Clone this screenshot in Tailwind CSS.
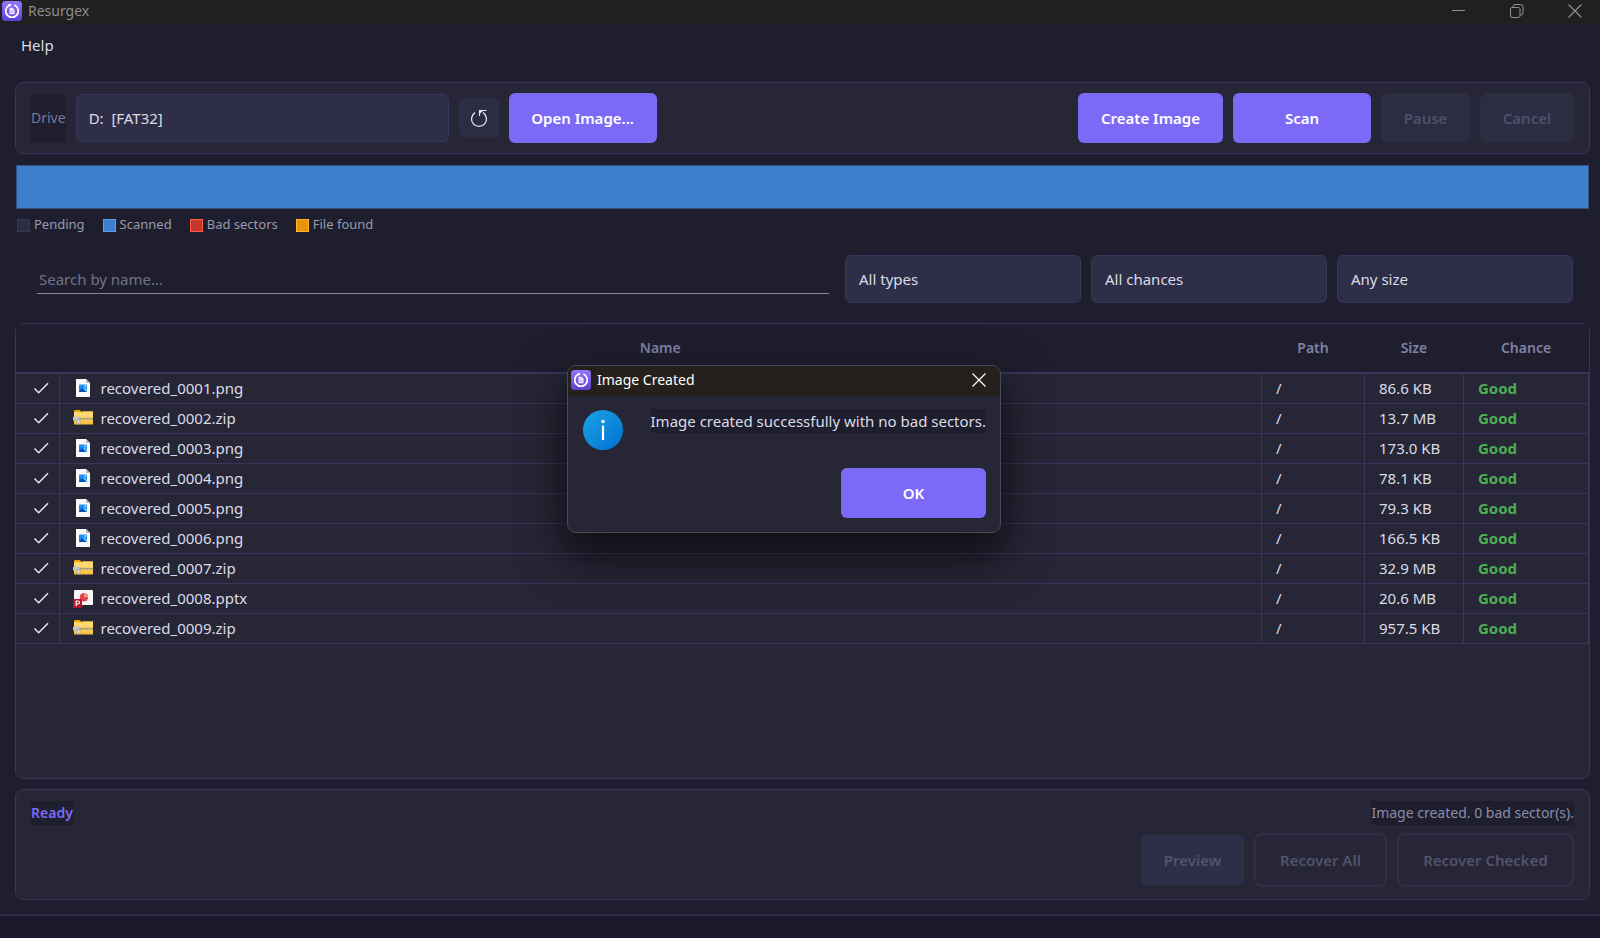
<!DOCTYPE html>
<html lang="en">
<head>
    <meta charset="UTF-8">
    <meta name="viewport" content="width=device-width, initial-scale=1.0">
    <title>Resurgex</title>
    <script src="https://cdn.jsdelivr.net/npm/@tailwindcss/browser@4"></script>
</head>
<body class="relative flex min-h-screen flex-col bg-[#1e1e2e] font-['Noto_Sans','Open_Sans',sans-serif] text-[15px] text-[#dcdce6]">

    <!-- Shared icons -->
    <svg class="absolute size-0" aria-hidden="true">
        <defs>
            <linearGradient id="logo-bg" x1="0" y1="0" x2="0" y2="1">
                <stop offset="0" stop-color="#9478fb"/>
                <stop offset="1" stop-color="#5c3fd0"/>
            </linearGradient>
            <linearGradient id="info-bg" x1="0" y1="0" x2="1" y2="1">
                <stop offset="0" stop-color="#1ba4e8"/>
                <stop offset="1" stop-color="#0270cf"/>
            </linearGradient>
            <linearGradient id="folder-bg" x1="0" y1="0" x2="0" y2="1">
                <stop offset="0" stop-color="#ffe082"/>
                <stop offset="1" stop-color="#f7bf3a"/>
            </linearGradient>
        </defs>
        <symbol id="logo" viewBox="0 0 20 20">
            <rect width="20" height="20" rx="3.500" fill="url(#logo-bg)"/>
            <path d="M7.200 4.300a6.300 6.300 0 1 0 5.600 0" fill="none" stroke="#fff" stroke-width="1.700" stroke-linecap="round"/>
            <path d="M6.300 3 9.600 3.200 8 6z" fill="#fff"/>
            <path d="M7.500 6.800h3.200l1.900 1.900v4.500H7.500z" fill="#eee8ff"/>
            <path d="M8.700 9.800h2.700M8.700 11.500h2.700" stroke="#a08af2" stroke-width=".6"/>
        </symbol>
        <symbol id="png" viewBox="0 0 20 20">
            <path d="M3 1h10l4 4v14H3z" fill="#fafafa"/>
            <path d="M13 1v4h4z" fill="#b9bcc4"/>
            <rect x="6" y="6.500" width="8" height="7.500" rx=".8" fill="#1f8cf0"/>
            <path d="M6 13.200 9.200 9.800 13.400 14H6.800a.8.800 0 0 1-.8-.8z" fill="#0b4fb3"/>
            <path d="M9.800 10.400 11.600 9 14 11.400V14h-.7z" fill="#44c1fb"/>
            <circle cx="12.300" cy="8.100" r=".8" fill="#fff"/>
        </symbol>
        <symbol id="zip" viewBox="0 0 20 20">
            <path d="M1 3a1 1 0 0 1 1-1h5l2 2.500H1z" fill="#f0a30a"/>
            <path d="M1 4h19v12.500H1z" fill="url(#folder-bg)"/>
            <path d="M1 4.200h7.500l1-1H20v2H1z" fill="#ffd35c"/>
            <path d="M5 9.500h15v2.500H5z" fill="#d9c48a"/>
            <path d="M5 10.800h15" stroke="#77694a" stroke-width="1" stroke-dasharray="1 .8"/>
            <path d="M0 8.800h6.500v3.700H0z" fill="#c3c5c9"/>
            <path d="M4 11.500h3v4.500H4z" fill="#dfe0e2" stroke="#8b8d91" stroke-width=".6"/>
        </symbol>
        <symbol id="pptx" viewBox="0 0 20 20">
            <rect x="1" y="2" width="19" height="15" rx="1" fill="#f7f7f7"/>
            <circle cx="11" cy="9.300" r="4.200" fill="#e8404a"/>
            <path d="M11 9.300V5.100a4.200 4.200 0 0 1 4.200 4.200z" fill="#ff8f7e"/>
            <rect x="0" y="11" width="9" height="9" rx="1.200" fill="#b5152f"/>
            <path d="M3.200 18v-5h1.800a1.500 1.500 0 0 1 0 3H3.200" fill="none" stroke="#fff" stroke-width="1.200"/>
        </symbol>
    </svg>

    <!-- Title bar -->
    <header class="flex h-6 items-center bg-[#202020] pr-[17px] pb-[2px] pl-0.5">
        <svg class="size-5"><use href="#logo"/></svg>
        <span class="ml-1.5 text-sm text-[#8d8d8d]">Resurgex</span>
        <div class="ml-auto flex items-center gap-[42px] text-[#8f8f8f]">
            <button type="button" aria-label="Minimize" class="size-4">
                <svg class="size-4" viewBox="0 0 16 16" fill="none" stroke="currentColor"><path d="M1 7.500h13"/></svg>
            </button>
            <button type="button" aria-label="Restore" class="size-4">
                <svg class="size-4" viewBox="0 0 16 16" fill="none" stroke="currentColor"><rect x="1.500" y="4.500" width="9.500" height="10" rx="1.500"/><path d="M4 4.300V3.500a2 2 0 0 1 2-2h5.500a2.500 2.500 0 0 1 2.500 2.500V10a2 2 0 0 1-2 2h-.8"/></svg>
            </button>
            <button type="button" aria-label="Close" class="size-4">
                <svg class="size-4" viewBox="0 0 16 16" fill="none" stroke="currentColor" stroke-width="1.200"><path d="m1.500 1.500 13 13M14.500 1.500l-13 13"/></svg>
            </button>
        </div>
    </header>

    <!-- Menu -->
    <nav class="flex h-[58px] items-start px-[21px] pt-[9px]">
        <a href="#" class="text-[15px] leading-6">Help</a>
    </nav>

    <main class="flex flex-1 flex-col pr-[10px] pl-[15px]">
        <!-- Drive toolbar -->
        <section class="flex h-[72px] items-center gap-[10px] rounded-lg border border-[#37365a] bg-[#262637] px-[15px]">
            <label for="drive" class="flex h-12 items-center bg-[#1e1e2e] text-sm text-[#7a799c]">Drive</label>
            <select id="drive" class="h-12 w-[373px] appearance-none rounded-md border border-[#37365a] bg-[#2f2e48] px-3 text-[15px]">
                <option>D:&nbsp; [FAT32]</option>
            </select>
            <button type="button" aria-label="Refresh" class="grid size-10 place-items-center rounded-md bg-[#2c2c42]">
                <svg class="size-5" viewBox="0 0 20 20" fill="none" stroke="#e4e4ea" stroke-width="1.300"><path d="M6 4.600a7.500 7.500 0 1 0 8 0"/><path d="M10.500 8V2.500H17.500" stroke-width="1.200"/><path d="M10.500 2.500h4l-4 3.500z" fill="#e4e4ea" stroke="none"/></svg>
            </button>
            <button type="button" class="h-[50px] w-[148px] rounded-md bg-[#7c6af7] text-[15px] font-semibold text-white">Open Image...</button>
            <button type="button" class="ml-auto h-[50px] w-[145px] rounded-md bg-[#7c6af7] text-[15px] font-semibold text-white">Create Image</button>
            <button type="button" class="h-[50px] w-[138px] rounded-md bg-[#7c6af7] text-[15px] font-semibold text-white">Scan</button>
            <button type="button" disabled class="h-[50px] w-[89px] rounded-md bg-[#2c2c42] text-[15px] font-semibold text-[#504f6b]">Pause</button>
            <button type="button" disabled class="h-[50px] w-[94px] rounded-md bg-[#2c2c42] text-[15px] font-semibold text-[#504f6b]">Cancel</button>
        </section>

        <!-- Sector map -->
        <div class="mx-px mt-[11px] h-11 border border-[#35507c] bg-[#3d7fce]"></div>
        <ul class="mt-1 flex h-6 items-center gap-[18px] pl-0.5 text-[13px] text-[#9a99ad]">
            <li class="flex items-center gap-1"><span class="size-[13px] border border-[#37365a] bg-[#2d2d42]"></span>Pending</li>
            <li class="flex items-center gap-1"><span class="size-[13px] border border-[#5aa0ee] bg-[#3d7fce]"></span>Scanned</li>
            <li class="flex items-center gap-1"><span class="size-[13px] border border-[#ff5a45] bg-[#c0392b]"></span>Bad sectors</li>
            <li class="flex items-center gap-1"><span class="size-[13px] border border-[#ffb62e] bg-[#e8940a]"></span>File found</li>
        </ul>

        <!-- Filters -->
        <div class="mt-[18px] flex items-center gap-[10px] pr-[17px] pl-[22px]">
            <input type="text" aria-label="Search by name" placeholder="Search by name..." class="mr-[6px] h-[30px] min-w-0 flex-1 border-b border-[#8a8a94] px-0.5 text-[15px] placeholder:text-[#73728a]">
            <select aria-label="Type" class="h-12 w-[236px] appearance-none rounded-md border border-[#37365a] bg-[#2f2e48] px-[13px] text-[15px]">
                <option>All types</option>
            </select>
            <select aria-label="Chance" class="h-12 w-[236px] appearance-none rounded-md border border-[#37365a] bg-[#2f2e48] px-[13px] text-[15px]">
                <option>All chances</option>
            </select>
            <select aria-label="Size" class="h-12 w-[236px] appearance-none rounded-md border border-[#37365a] bg-[#2f2e48] px-[13px] text-[15px]">
                <option>Any size</option>
            </select>
        </div>

        <!-- Recovered files -->
        <section class="mt-5 flex-1 rounded-lg border border-[#37365a] bg-[#262637]">
            <table class="w-full table-fixed border-collapse">
                <colgroup>
                    <col class="w-[43px]">
                    <col>
                    <col class="w-[103px]">
                    <col class="w-[99px]">
                    <col class="w-[125px]">
                </colgroup>
                <thead>
                    <tr class="h-[49px] border-b-2 border-[#37365a] bg-[#1e1e2e] text-sm text-[#8180a6]">
                        <th></th>
                        <th class="font-semibold">Name</th>
                        <th class="font-semibold">Path</th>
                        <th class="font-semibold">Size</th>
                        <th class="font-semibold">Chance</th>
                    </tr>
                </thead>
                <tbody id="files"></tbody>
            </table>
        </section>

        <!-- Status -->
        <section class="mt-[10px] mb-[14px] h-[111px] rounded-lg border border-[#37365a] bg-[#262637] px-[15px] pt-[11px]">
            <div class="flex items-center justify-between text-sm leading-6">
                <span class="bg-[#1e1e2e] font-semibold text-[#7c6af7]">Ready</span>
                <span class="bg-[#1e1e2e] text-[#8d8ca8]">Image created. 0 bad sector(s).</span>
            </div>
            <div class="mt-2 flex items-center justify-end gap-[10px]">
                <button type="button" disabled class="h-[50px] w-[103px] rounded-md bg-[#2f2e48] text-[15px] font-semibold text-[#53526e]">Preview</button>
                <button type="button" disabled class="h-[54px] w-[133px] rounded-lg border-2 border-[#2f2e48] text-[15px] font-semibold text-[#53526e]">Recover All</button>
                <button type="button" disabled class="h-[54px] w-[177px] rounded-lg border-2 border-[#2f2e48] text-[15px] font-semibold text-[#53526e]">Recover Checked</button>
            </div>
        </section>
    </main>

    <footer class="h-6 border-t-2 border-[#2d2c48] bg-[#1a1a2c]"></footer>

    <!-- Dialog -->
    <div role="dialog" aria-labelledby="dialog-title" class="absolute top-[365px] left-[567px] w-[434px] overflow-hidden rounded-[9px] border border-[#4a4a52] bg-[#262637] shadow-[0_20px_44px_6px_rgba(0,0,0,0.6)]">
        <div class="flex h-[30px] items-center bg-[#26201c] pr-[13px] pb-[2px] pl-[3px]">
            <svg class="size-5"><use href="#logo"/></svg>
            <h2 id="dialog-title" class="ml-1.5 text-sm text-white">Image Created</h2>
            <button type="button" id="dialog-close" aria-label="Close" class="ml-auto size-4">
                <svg class="size-4" viewBox="0 0 16 16" fill="none" stroke="#fff" stroke-width="1.200"><path d="m1.500 1.500 13 13M14.500 1.500l-13 13"/></svg>
            </button>
        </div>
        <div class="flex items-start px-[14px] pt-[13px]">
            <svg class="size-[42px]" viewBox="0 0 42 42"><circle cx="21" cy="21" r="20" fill="url(#info-bg)"/><circle cx="21" cy="12.500" r="1.700" fill="#fff"/><path d="M21 16.500V31" stroke="#fff" stroke-width="2.200"/></svg>
            <p class="ml-auto bg-[#1e1e2e] text-[15px] leading-6">Image created successfully with no bad sectors.</p>
        </div>
        <div class="flex justify-end px-[14px] pt-[17px] pb-[14px]">
            <button type="button" id="dialog-ok" class="h-[50px] w-[145px] rounded-md bg-[#7c6af7] text-[15px] font-semibold text-white">OK</button>
        </div>
    </div>

    <script>
        const files = [
            { name: "recovered_0001.png", type: "png", size: "86.6 KB" },
            { name: "recovered_0002.zip", type: "zip", size: "13.7 MB" },
            { name: "recovered_0003.png", type: "png", size: "173.0 KB" },
            { name: "recovered_0004.png", type: "png", size: "78.1 KB" },
            { name: "recovered_0005.png", type: "png", size: "79.3 KB" },
            { name: "recovered_0006.png", type: "png", size: "166.5 KB" },
            { name: "recovered_0007.zip", type: "zip", size: "32.9 MB" },
            { name: "recovered_0008.pptx", type: "pptx", size: "20.6 MB" },
            { name: "recovered_0009.zip", type: "zip", size: "957.5 KB" },
        ];

        // Build the file rows
        document.getElementById("files").innerHTML = files.map((file) => `
            <tr class="h-[30px] border-b border-[#37365a]">
                <td class="border-r border-[#37365a] pl-[7px]">
                    <label class="relative mx-auto block size-4">
                        <input type="checkbox" checked aria-label="${file.name}" class="peer absolute inset-0 appearance-none">
                        <svg class="invisible size-4 peer-checked:visible" viewBox="0 0 16 16" fill="none" stroke="#e6e6ec" stroke-width="1.500"><path d="m1.500 8.500 4.200 4.200L15 3.300"/></svg>
                    </label>
                </td>
                <td class="border-r border-[#37365a]">
                    <div class="flex items-center gap-2 pl-[13px] text-[15px]">
                        <svg class="size-5"><use href="#${file.type}"/></svg>${file.name}
                    </div>
                </td>
                <td class="border-r border-[#37365a] pl-[14px] text-[15px]">/</td>
                <td class="border-r border-[#37365a] pl-[14px] text-[15px]">${file.size}</td>
                <td class="border-r border-[#37365a] pl-[14px] text-[15px] font-bold text-[#4caf50]">Good</td>
            </tr>`).join("");

        // Close the dialog
        const dialog = document.querySelector("[role=dialog]");
        document.getElementById("dialog-close").addEventListener("click", () => dialog.remove());
        document.getElementById("dialog-ok").addEventListener("click", () => dialog.remove());
    </script>

</body>
</html>
